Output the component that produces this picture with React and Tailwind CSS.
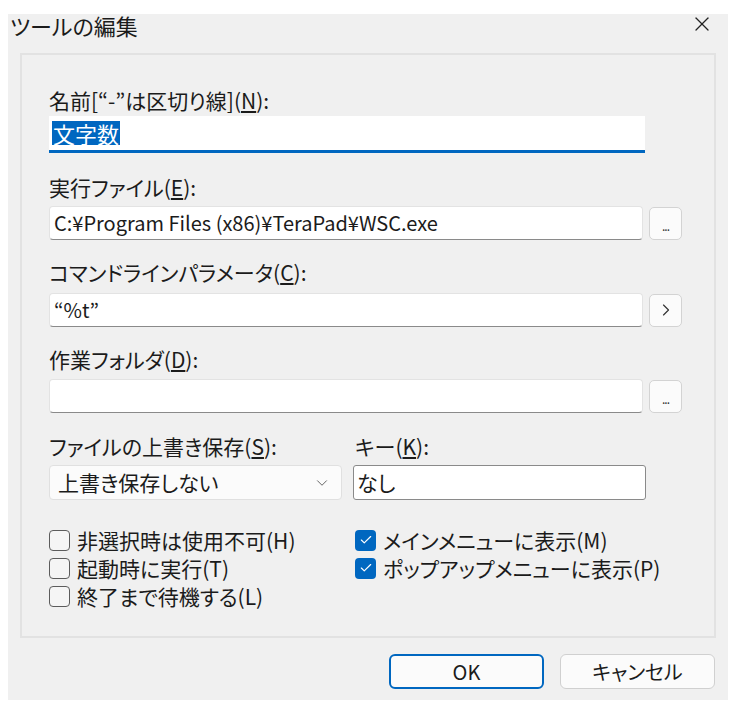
import { ChevronDown, ChevronRight, Check, X } from "lucide-react";

const font = "font-['Meiryo_UI','Noto_Sans_CJK_JP',sans-serif] [font-feature-settings:'palt']";

const Label = ({ children, className = "" }) => (
  <div className={`h-[24px] whitespace-nowrap text-[21px] leading-[24px] text-[#1b1b1b] ${className}`}>{children}</div>
);

const Mnemonic = ({ k }) => (
  <>
    (<span className="underline underline-offset-2">{k}</span>):
  </>
);

const SmallButton = ({ children }) => (
  <div className="ml-[6px] flex h-[33px] w-[33px] items-center justify-center rounded-[5px] border border-[#d3d3d3] bg-[#fbfbfb] text-[#333]">
    {children}
  </div>
);

const TextBox = ({ value, className = "" }) => (
  <div
    className={`flex h-[34px] w-[594px] items-center rounded-[4px] border border-[#e3e3e3] border-b-[#8a8a8a] bg-white px-[4px] text-[20px] text-[#1b1b1b] ${className}`}
  >
    {value}
  </div>
);

const CheckBox = ({ checked, label }) => (
  <div className="flex h-[28px] items-center">
    {checked ? (
      <span className="flex h-[21px] w-[21px] items-center justify-center rounded-[4px] bg-[#0067c0]">
        <Check size={14} strokeWidth={2} className="text-white" />
      </span>
    ) : (
      <span className="h-[21px] w-[21px] rounded-[4px] border-[1.5px] border-[#5c5c5c] bg-[#f5f5f5]" />
    )}
    <span className="ml-[7px] whitespace-nowrap text-[21px] leading-[24px] text-[#1b1b1b]">{label}</span>
  </div>
);

export default function App() {
  return (
    <div className={`h-[705px] w-[744px] bg-white pl-[8px] pt-[14px] ${font}`}>
      <div className="flex h-[686px] w-[720px] flex-col bg-[#f0f0f0]">
        {/* title bar */}
        <div className="flex h-[39px] items-start justify-between pl-[2px] pr-[14px]">
          <span className="-mt-[4px] text-[22px] leading-[30px] text-[#1b1b1b]">ツールの編集</span>
          <X size={24} strokeWidth={1.3} className="mt-[-2px] text-[#222]" />
        </div>

        {/* group box */}
        <div className="ml-[12px] h-[585px] w-[696px] border-2 border-[#e2e2e2] bg-[#f0f0f0] pl-[27px] pt-[33px]">
          <Label>
            名前[“-”は区切り線]
            <Mnemonic k="N" />
          </Label>
          <div className="mt-[4px] flex h-[37px] w-[596px] items-center border-b-[3px] border-[#0067c0] bg-white pl-[3px]">
            <span className="bg-[#0067c0] px-[1px] text-[22px] leading-[24px] text-white">文字数</span>
          </div>

          <Label className="mt-[22px]">
            実行ファイル
            <Mnemonic k="E" />
          </Label>
          <div className="mt-[7px] flex items-center">
            <TextBox value="C:¥Program Files (x86)¥TeraPad¥WSC.exe" />
            <SmallButton>
              <span className="mt-[6px] text-[12px] leading-none tracking-[-1px]">...</span>
            </SmallButton>
          </div>

          <Label className="mt-[20px]">
            コマンドラインパラメータ
            <Mnemonic k="C" />
          </Label>
          <div className="mt-[9px] flex items-center">
            <TextBox value="“%t”" />
            <SmallButton>
              <ChevronRight size={20} strokeWidth={1.4} />
            </SmallButton>
          </div>

          <Label className="mt-[20px]">
            作業フォルダ
            <Mnemonic k="D" />
          </Label>
          <div className="mt-[8px] flex items-center">
            <TextBox value="" />
            <SmallButton>
              <span className="mt-[6px] text-[12px] leading-none tracking-[-1px]">...</span>
            </SmallButton>
          </div>

          <div className="mt-[21px] flex">
            <Label className="w-[306px]">
              ファイルの上書き保存
              <Mnemonic k="S" />
            </Label>
            <Label>
              キー
              <Mnemonic k="K" />
            </Label>
          </div>
          <div className="mt-[7px] flex items-center">
            <div className="flex h-[35px] w-[293px] items-center justify-between rounded-[4px] border border-[#e0e0e0] bg-[#fbfbfb] pl-[8px] pr-[10px] text-[21px] text-[#1b1b1b]">
              <span>上書き保存しない</span>
              <ChevronDown size={18} strokeWidth={1.2} className="text-[#555]" />
            </div>
            <div className="ml-[11px] flex h-[35px] w-[293px] items-center rounded-[3px] border-[1.5px] border-[#8a8a8a] bg-white pl-[3px] text-[21px] text-[#1b1b1b]">
              なし
            </div>
          </div>

          <div className="mt-[26px] flex">
            <div className="w-[306px]">
              <CheckBox label="非選択時は使用不可(H)" />
              <CheckBox label="起動時に実行(T)" />
              <CheckBox label="終了まで待機する(L)" />
            </div>
            <div>
              <CheckBox checked label="メインメニューに表示(M)" />
              <CheckBox checked label="ポップアップメニューに表示(P)" />
            </div>
          </div>
        </div>

        {/* buttons */}
        <div className="mt-[16px] flex justify-end pr-[13px]">
          <div className="flex h-[35px] w-[155px] items-center justify-center rounded-[6px] border-2 border-[#0067c0] bg-[#fbfbfb] text-[20px] text-[#1b1b1b]">
            OK
          </div>
          <div className="ml-[16px] flex h-[35px] w-[155px] items-center justify-center rounded-[6px] border border-[#d0d0d0] bg-[#fbfbfb] text-[20px] text-[#1b1b1b]">
            キャンセル
          </div>
        </div>
      </div>
    </div>
  );
}
